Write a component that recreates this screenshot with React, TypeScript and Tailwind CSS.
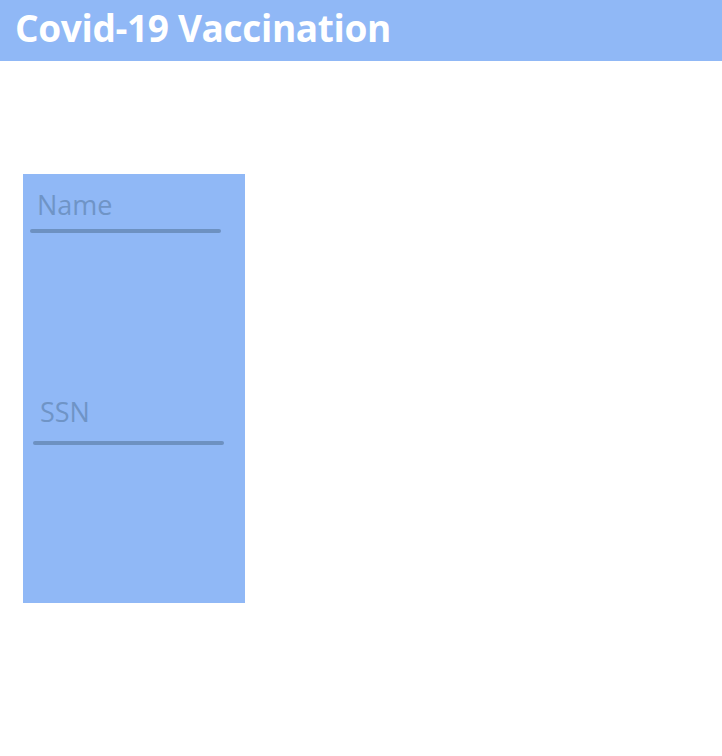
import React from "react";

function Field({ label, shift, gap }: { label: string; shift: string; gap: string }) {
  return (
    <div className={`flex flex-col ${shift}`}>
      <label className="pl-[7px] font-['Open_Sans',sans-serif] text-[27px] leading-[32px] text-[#6f94c6]">
        {label}
      </label>
      <div className={`${gap} h-[4px] w-[191px] rounded-full bg-[#6d91c1]`} />
    </div>
  );
}

export default function App() {
  return (
    <div className="min-h-[756px] w-full bg-white">
      <header className="flex h-[61px] items-start bg-[#90b8f6] pl-[15px] pt-[6px]">
        <h1 className="font-['Open_Sans',sans-serif] text-[37px] font-bold leading-[44px] tracking-[-0.35px] text-white">
          Covid-19 Vaccination
        </h1>
      </header>

      <form className="ml-[23px] mt-[113px] flex h-[429px] w-[222px] flex-col bg-[#90b8f6] pt-[15px]">
        <Field label="Name" shift="ml-[7px]" gap="mt-[8px]" />
        <div className="mt-[163px]">
          <Field label="SSN" shift="ml-[10px]" gap="mt-[13px]" />
        </div>
      </form>
    </div>
  );
}
